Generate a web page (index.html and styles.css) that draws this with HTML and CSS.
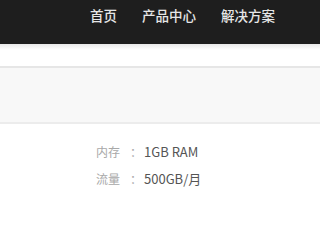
FILE: index.html
```html
<!DOCTYPE html>
<html lang="zh-CN">
<head>
<meta charset="utf-8">
<link rel="stylesheet" href="styles.css">
</head>
<body>
<header class="topbar">
  <nav class="nav">
    <a class="nav-item">首页</a>
    <a class="nav-item">产品中心</a>
    <a class="nav-item">解决方案</a>
  </nav>
</header>
<div class="subbar"></div>
<div class="panel"></div>
<section class="specs">
  <div class="spec"><span class="label">内存<span class="colon">：</span></span><span class="value">1GB RAM</span></div>
  <div class="spec"><span class="label">流量<span class="colon">：</span></span><span class="value">500GB/月</span></div>
</section>
</body>
</html>
```
FILE: styles.css
```css
html, body {
  margin: 0;
  padding: 0;
  background: #ffffff;
  font-family: "Noto Sans CJK SC", "Noto Sans", sans-serif;
}
.topbar {
  height: 44px;
  background: #1e1e1e;
}
.nav {
  display: flex;
  gap: 25px;
  padding-left: 90px;
  padding-top: 6px;
}
.nav-item {
  color: #e6e6e6;
  font-size: 13.5px;
  line-height: 18px;
  font-weight: 500;
}
.subbar {
  height: 22px;
  background: linear-gradient(#e8e8e8 0, #ffffff 6px, #ffffff 100%);
  border-bottom: 2px solid #e6e6e6;
}
.panel {
  height: 54px;
  background: #f8f8f8;
  border-bottom: 2px solid #ececec;
}
.specs {
  padding: 14px 0 0 96px;
  font-size: 12px;
}
.spec {
  display: flex;
  align-items: baseline;
  line-height: 27px;
  white-space: nowrap;
}
.label {
  color: #a8a8a8;
  width: 48px;
  flex-shrink: 0;
}
.colon {
  margin-left: 10px;
}
.value {
  color: #555555;
  font-size: 13px;
}
```
